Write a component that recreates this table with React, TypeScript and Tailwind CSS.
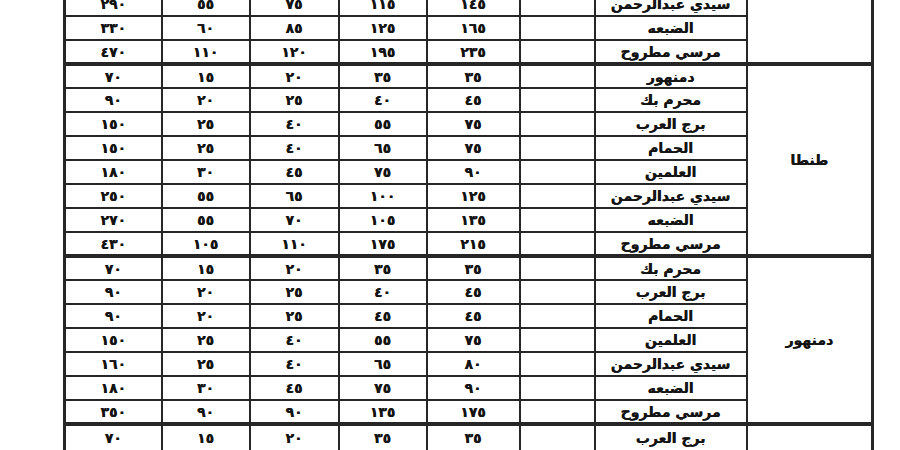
import React from "react";

type Row = [string, string, string, string, string, string];
type Group = { origin: string; rows: Row[] };

const groups: Group[] = [
  {
    origin: "",
    rows: [
      ["٢٩٠", "٥٥", "٧٥", "١١٥", "١٤٥", "سيدي عبدالرحمن"],
      ["٣٣٠", "٦٠", "٨٥", "١٢٥", "١٦٥", "الضبعه"],
      ["٤٧٠", "١١٠", "١٢٠", "١٩٥", "٢٣٥", "مرسي مطروح"],
    ],
  },
  {
    origin: "طنطا",
    rows: [
      ["٧٠", "١٥", "٢٠", "٣٥", "٣٥", "دمنهور"],
      ["٩٠", "٢٠", "٢٥", "٤٠", "٤٥", "محرم بك"],
      ["١٥٠", "٢٥", "٤٠", "٥٥", "٧٥", "برج العرب"],
      ["١٥٠", "٢٥", "٤٠", "٦٥", "٧٥", "الحمام"],
      ["١٨٠", "٣٠", "٤٥", "٧٥", "٩٠", "العلمين"],
      ["٢٥٠", "٥٥", "٦٥", "١٠٠", "١٢٥", "سيدي عبدالرحمن"],
      ["٢٧٠", "٥٥", "٧٠", "١٠٥", "١٣٥", "الضبعه"],
      ["٤٣٠", "١٠٥", "١١٠", "١٧٥", "٢١٥", "مرسي مطروح"],
    ],
  },
  {
    origin: "دمنهور",
    rows: [
      ["٧٠", "١٥", "٢٠", "٣٥", "٣٥", "محرم بك"],
      ["٩٠", "٢٠", "٢٥", "٤٠", "٤٥", "برج العرب"],
      ["٩٠", "٢٠", "٢٥", "٤٥", "٤٥", "الحمام"],
      ["١٥٠", "٢٥", "٤٠", "٥٥", "٧٥", "العلمين"],
      ["١٦٠", "٢٥", "٤٠", "٦٥", "٨٠", "سيدي عبدالرحمن"],
      ["١٨٠", "٣٠", "٤٥", "٧٥", "٩٠", "الضبعه"],
      ["٣٥٠", "٩٠", "٩٠", "١٣٥", "١٧٥", "مرسي مطروح"],
    ],
  },
  {
    origin: "",
    rows: [
      ["٧٠", "١٥", "٢٠", "٣٥", "٣٥", "برج العرب"],
      ["٩٠", "٢٠", "٢٥", "٤٠", "٤٥", "الحمام"],
    ],
  },
];

export default function App() {
  return (
    <div className="w-[900px] h-[450px] overflow-hidden bg-white">
      <table
        className="ml-[63px] mt-[-9px] border-collapse table-fixed w-[808px] text-[#141414] text-[14px] font-bold [text-shadow:0.35px_0_0_#141414]"
        style={{ fontFamily: '"DejaVu Sans", sans-serif' }}
      >
        <colgroup>
          <col className="w-[97px]" />
          <col className="w-[88px]" />
          <col className="w-[89px]" />
          <col className="w-[88px]" />
          <col className="w-[93px]" />
          <col className="w-[75px]" />
          <col className="w-[152px]" />
          <col className="w-[126px]" />
        </colgroup>
        <tbody>
          {groups.map((g, gi) =>
            g.rows.map((r, i) => {
              const top = i === 0 && gi > 0 ? "border-t-4" : "border-t-2";
              const h = gi === groups.length - 1 && i === 0 ? "h-[27px]" : "h-[24px]";
              const cell = `${h} p-0 text-center leading-none border-2 border-[#262626] ${top}`;
              return (
                <tr key={`${gi}-${i}`}>
                  <td className={`${cell} border-l-[3px]`}>{r[0]}</td>
                  <td className={cell}>{r[1]}</td>
                  <td className={cell}>{r[2]}</td>
                  <td className={cell}>{r[3]}</td>
                  <td className={cell}>{r[4]}</td>
                  <td className={cell}></td>
                  <td className={cell}>{r[5]}</td>
                  {i === 0 && (
                    <td
                      rowSpan={g.rows.length}
                      className={`p-0 text-center align-middle border-2 border-r-[3px] border-[#262626] ${
                        gi > 0 ? "border-t-4" : "border-t-2"
                      } border-b-4`}
                    >
                      {g.origin}
                    </td>
                  )}
                </tr>
              );
            })
          )}
        </tbody>
      </table>
    </div>
  );
}
